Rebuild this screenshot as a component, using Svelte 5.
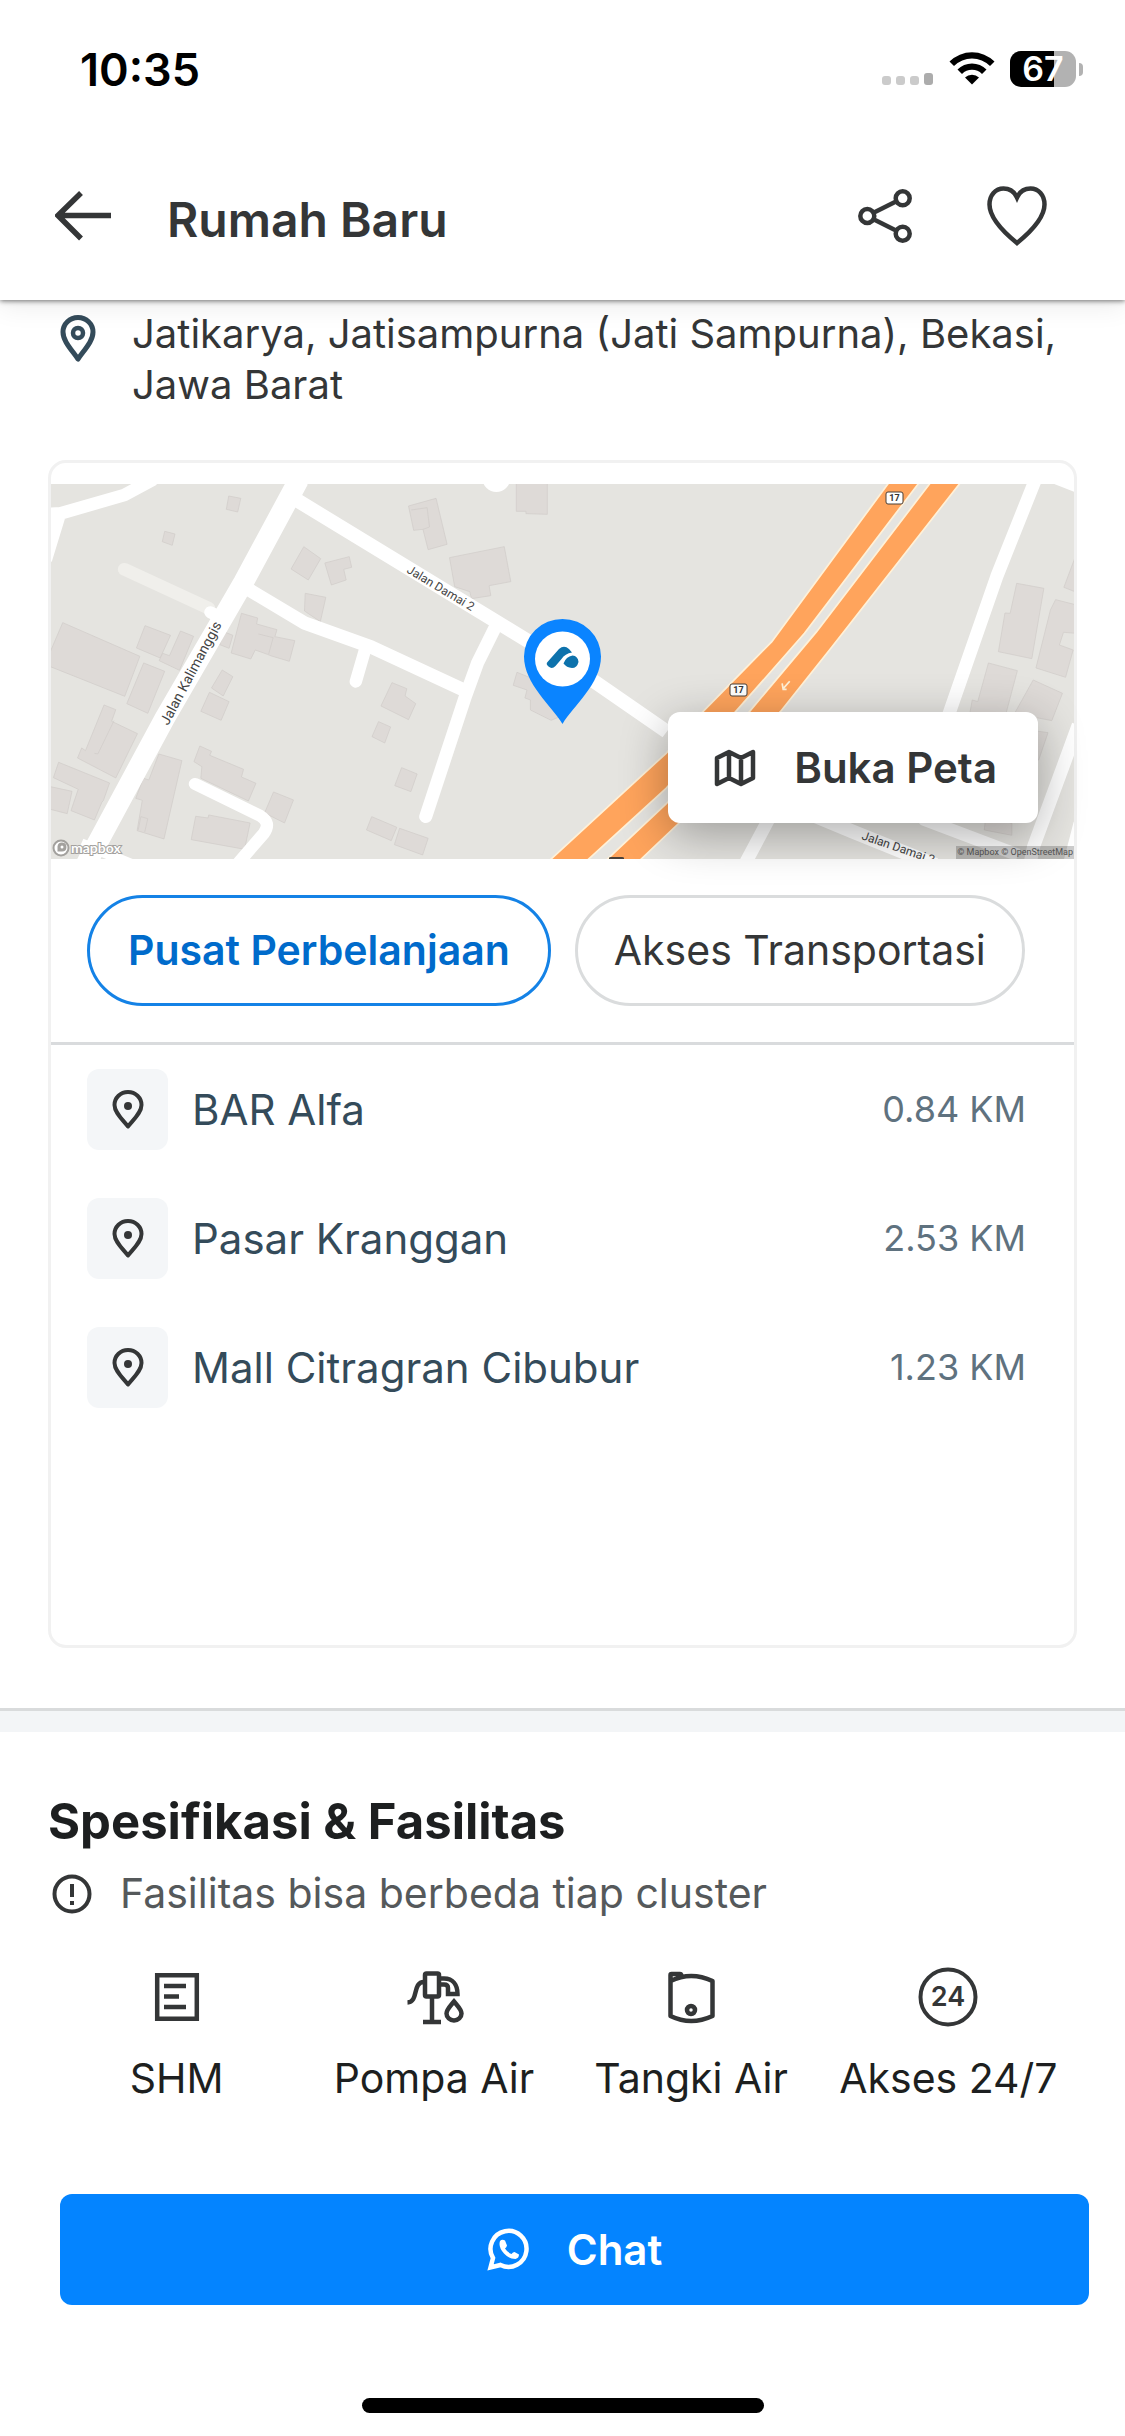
<script>
  const tabs = ['Pusat Perbelanjaan', 'Akses Transportasi'];
  let activeTab = $state(0);
  let liked = $state(false);

  const places = [
    { name: 'BAR Alfa', distance: '0.84 KM' },
    { name: 'Pasar Kranggan', distance: '2.53 KM' },
    { name: 'Mall Citragran Cibubur', distance: '1.23 KM' }
  ];

  const features = [
    { icon: 'certificate', label: 'SHM' },
    { icon: 'pump', label: 'Pompa Air' },
    { icon: 'tank', label: 'Tangki Air' },
    { icon: 'access', label: 'Akses 24/7' }
  ];

  const westBuildings = [
    '548,138 583,145 574,186 541,178',
    '362,244 392,252 384,286 355,275',
    '1070,168 1150,145 1182,283 1127,299 1112,238 1085,241',
    '1383,95 1473,95 1473,193 1411,191 1411,184 1383,184',
    '1189,323 1348,290 1367,395 1304,407 1309,437 1253,446 1248,425 1204,410',
    '766,290 815,326 779,390 729,357',
    '827,339 898,320 905,352 882,358 889,390 846,405',
    '770,430 830,442 814,515 768,483',
    '66,518 290,619 246,739 30,650 30,605',
    '305,527 379,556 349,624 280,594',
    '408,543 446,559 405,661 346,632 356,610 376,617',
    '585,490 632,504 629,522 688,539 682,560 740,572 724,634 672,618 660,613 625,600 612,627 555,609',
    '533,545 560,556 549,595 522,584',
    '301,639 362,664 313,790 252,761',
    '529,660 560,680 532,738 498,714',
    '492,727 549,755 526,811 467,784',
    '186,765 220,779 208,814 283,851 220,984 109,924 121,894 132,902',
    '54,937 202,999 184,1052 180,1056 158,1110 90,1082 111,1018 39,983',
    '30,1010 93,1024 79,1091 30,1078',
    '345,912 412,932 360,1167 282,1142 297,1051 278,1045 300,985 316,990',
    '464,888 498,904 493,916 591,958 585,981 627,1000 605,1053 467,985 470,950 447,935',
    '678,1026 736,1050 710,1119 652,1089',
    '452,1099 488,1104 490,1095 610,1119 594,1198 439,1169',
    '1022,698 1065,716 1060,738 1091,761 1070,809 990,768',
    '983,815 1018,831 1001,879 964,860',
    '1050,953 1095,972 1077,1025 1030,1007',
    '963,1100 1036,1132 1020,1172 948,1140',
    '1044,1135 1127,1165 1111,1215 1029,1184',
    '1385,667 1440,690 1510,800 1484,811 1424,780 1424,750 1408,744 1414,720 1374,706'
  ];

  const eastBuildings = [
    '1326,400 1405,415 1370,626 1273,605 1292,489 1307,490',
    '1500,310 1463,412 1500,427',
    '1439,449 1500,465 1500,550 1462,547 1450,585 1490,600 1468,682 1382,654 1424,480',
    '1244,639 1328,662 1290,810 1190,790 1197,750 1213,755',
    '1374,690 1459,730 1428,812 1320,790',
    '1360,840 1417,848 1390,930 1340,930',
    '1236,1100 1312,1120 1312,1156 1232,1140'
  ];
</script>

<div class="page">
  <header class="top">
    <div class="status">
      <time>10:35</time>
      <div class="indicators">
        <svg width="52" height="12" viewBox="0 0 52 12" aria-hidden="true">
          <g fill="#cbcbcb">
            <rect x="0" y="3" width="9" height="9" rx="3" />
            <rect x="14" y="3" width="9" height="9" rx="3" />
            <rect x="28" y="3" width="9" height="9" rx="3" />
          </g>
          <rect x="42" y="0" width="9" height="12" rx="3" fill="#acacac" />
        </svg>
        <svg class="wifi" width="46" height="34" viewBox="0 0 46 34" aria-hidden="true">
          <path d="M0.5 10.5A32 32 0 0 1 45.500 10.500L41 15A25.500 25.500 0 0 0 5 15Z" />
          <path d="M8.500 18.500A20.500 20.500 0 0 1 37.500 18.500L33 23A14 14 0 0 0 13 23Z" />
          <path d="M16 26.500A10 10 0 0 1 30 26.500L23 33.500Z" />
        </svg>
        <div class="battery"><span>67</span></div>
      </div>
    </div>
    <nav class="bar">
      <button class="icon" aria-label="Kembali">
        <svg width="56" height="50" viewBox="0 0 56 50" fill="none" stroke="#343637" stroke-width="5.500">
          <path d="M56 24.500H3M26 2L3 24.500L26 47.500" />
        </svg>
      </button>
      <h1>Rumah Baru</h1>
      <button class="icon" aria-label="Bagikan">
        <svg width="54" height="54" viewBox="0 0 54 54" fill="none" stroke="#343637" stroke-width="4.500">
          <circle cx="9.300" cy="27" r="7" />
          <circle cx="44.700" cy="9.300" r="7" />
          <circle cx="44.700" cy="44.700" r="7" />
          <path d="M16 23.500L38 12.500M16 30.500L38 41.500" />
        </svg>
      </button>
      <button class="icon" aria-label="Simpan" aria-pressed={liked} onclick={() => (liked = !liked)}>
        <svg width="60" height="60" viewBox="0 0 60 60" fill={liked ? '#343637' : 'none'} stroke="#343637" stroke-width="4.500">
          <path d="M30 57C14 44 2.500 30 2.500 18.500C2.500 9 8.500 2.500 16.500 2.500C23 2.500 27.500 6 30 11.500C32.500 6 37 2.500 43.500 2.500C51.500 2.500 57.500 9 57.500 18.500C57.500 30 46 44 30 57Z" />
        </svg>
      </button>
    </nav>
  </header>

  <main>
    <section class="location">
      <div class="address">
        <svg width="36" height="47" viewBox="0 0 36 47" fill="none" stroke="#344b5a" aria-hidden="true">
          <path d="M18 44C11 34 3 26 3 17A15 14.500 0 0 1 33 17C33 26 25 34 18 44Z" stroke-width="5" stroke-linejoin="round" />
          <circle cx="18" cy="18" r="5" stroke-width="4.500" />
        </svg>
        <p>Jatikarya, Jatisampurna (Jati Sampurna), Bekasi, Jawa Barat</p>
      </div>

      <div class="card">
        <div class="map">
          <svg class="canvas" viewBox="0 0 1023 375" preserveAspectRatio="xMidYMid slice" role="img" aria-label="Peta lokasi">
            <rect width="1023" height="375" fill="#e5e4e0" />
            <g transform="translate(-11 -34) scale(.3444 .3333)">
              <g fill="#dedad7" stroke="#cfcbc8" stroke-width="2">
                {#each westBuildings as points}<polygon {points} />{/each}
                <path d="M1078 180L1124 173L1131 231L1112 238M634 552L677 563L664 612M158 910L168 912L215 812M285 1140L293 1100L313 1106L304 1146" fill="none" />
              </g>
              <path d="M245 358L490 475" stroke="#f0efeb" stroke-width="38" stroke-linecap="round" />
              <g fill="none" stroke="#fff" stroke-linejoin="round">
                <path d="M751 90L592 395L362 805L130 1250" stroke-width="60" />
                <path d="M745 150L1325 515L1610 695L1820 845" stroke-width="42" />
                <path d="M600 415L770 520L960 590L1235 722" stroke-width="40" />
                <path d="M20 192L60 190L245 135L330 88M56 195L16 330" stroke-width="38" />
                <path d="M120 1180L280 1248" stroke-width="30" />
                <g stroke-linecap="round">
                  <path d="M495 487L520 500M945 595L917 695" stroke-width="36" />
                  <path d="M1325 525L1270 640L1235 740L1120 1100" stroke-width="38" />
                  <path d="M450 1002L640 1098Q672 1118 650 1150L575 1240" stroke-width="36" />
                </g>
              </g>
              <circle cx="1325" cy="86" r="40" fill="#fff" />
            </g>
            <g transform="translate(509 -34) scale(.3444 .3333)">
              <g fill="#dedad7" stroke="#cfcbc8" stroke-width="2">
                {#each eastBuildings as points}<polygon {points} />{/each}
              </g>
              <g fill="none" stroke="#fff" stroke-width="38" stroke-linejoin="round">
                <path d="M1380 90L1268 380L1130 790L1060 1110L1330 1215M610 1100L538 1240" />
                <path d="M1505 825L1375 1190L1365 1240M1510 1120L1480 1240" />
                <path d="M700 1080L850 1145L1090 1245" stroke-width="42" />
              </g>
              <polygon points="1430,100 1500,100 1500,128" fill="#fff" />
              <g fill="#ffa45c" stroke="#fff1d8" stroke-width="5">
                <polygon points="957,95 615,575 415,785 308,910 -34,1235 75,1235 308,1015 510,785 710,550 1045,95" />
                <polygon points="1078,95 745,545 550,785 308,1062 130,1235 228,1235 345,1120 640,785 790,590 1165,95" />
              </g>
              <path d="M667 694L648 716M645 700L648 718L658 718" fill="none" stroke="#fff1d8" stroke-width="5" />
            </g>
            <g fill="#fff" stroke="#4a4038" stroke-width="1">
              <rect x="835" y="8" width="17" height="12" rx="2" />
              <rect x="679" y="200" width="17" height="12" rx="2" />
            </g>
            <path d="M558 375V374Q558 373 560 373H571Q573 373 573 374V375Z" fill="#4a4038" />
            <g class="shield">
              <text x="843.500" y="17">17</text>
              <text x="687.500" y="209">17</text>
            </g>
            <g class="street">
              <text transform="translate(117 242) rotate(-62)">Jalan Kalimanggis</text>
              <text class="small" transform="translate(355 88) rotate(31)">Jalan Damai 2</text>
              <text class="small" transform="translate(810 355) rotate(19)">Jalan Damai 2</text>
            </g>
            <g stroke="#a3a19e" fill="#fff">
              <circle cx="10" cy="364" r="7.500" stroke-width="2" />
              <path d="M6.500 367.500V362.500A4.500 4.500 0 1 1 11 367.500Z" fill="#a3a19e" stroke="none" />
              <circle cx="11" cy="363" r="1.500" stroke="none" />
              <text class="brand" x="20" y="369">mapbox</text>
            </g>
            <path d="M511.500 240C501 222 473 200 473 172.500A38.500 37.500 0 0 1 550 172.500C550 200 522 222 511.500 240Z" fill="#0a84ff" />
            <circle cx="511.500" cy="175" r="27.500" fill="#fff" />
            <path d="M496.500 178L508 165Q513 160.500 518 165L521 168.500Q514 169.500 510.500 175L504.500 182Q501 185.500 497.500 182.500Q494.500 180 496.500 178Z" fill="#0d72ac" />
            <path d="M512.500 179.500Q515 172.500 521.500 171.500Q527 172 527.500 178Q526 184 521 184Q515.500 183.500 512.500 179.500Z" fill="#0d72ac" />
          </svg>
          <small>© Mapbox © OpenStreetMap</small>
          <button class="open-map">
            <svg width="42" height="38" viewBox="0 0 42 38" fill="none" stroke="#343637" stroke-width="4.500" stroke-linejoin="round" aria-hidden="true">
              <path d="M3 9L15 3L27 9L39 3V29L27 35L15 29L3 35ZM15 3V29M27 9V35" />
            </svg>
            Buka Peta
          </button>
        </div>

        <div class="tabs" role="tablist">
          {#each tabs as tab, i}
            <button role="tab" aria-selected={activeTab === i} class:active={activeTab === i} onclick={() => (activeTab = i)}>{tab}</button>
          {/each}
        </div>

        <ul class="places">
          {#each places as place}
            <li>
              <span class="badge">
                <svg width="32" height="40" viewBox="0 0 32 40" aria-hidden="true">
                  <path d="M16 36.500C10 29 2.500 22.500 2.500 15A13.500 13 0 0 1 29.500 15C29.500 22.500 22 29 16 36.500Z" fill="none" stroke="#343637" stroke-width="4" stroke-linejoin="round" />
                  <circle cx="16" cy="16" r="4" fill="#343637" />
                </svg>
              </span>
              <span class="name">{place.name}</span>
              <span class="distance">{place.distance}</span>
            </li>
          {/each}
        </ul>
      </div>
    </section>

    <section class="specs">
      <h2>Spesifikasi &amp; Fasilitas</h2>
      <p class="note">
        <svg width="42" height="42" viewBox="0 0 42 42" fill="none" stroke="#343637" stroke-width="4" aria-hidden="true">
          <circle cx="21" cy="21" r="17.500" />
          <path d="M21 11V24M21 28V32" />
        </svg>
        Fasilitas bisa berbeda tiap cluster
      </p>
      <ul class="features">
        {#each features as feature}
          <li>
            <svg width="60" height="60" viewBox="0 0 60 60" fill="none" stroke="#343637" stroke-width="4.500" aria-hidden="true">
              {#if feature.icon === 'certificate'}
                <path d="M10.200 8.200H49.800V51.800H10.200ZM17 19H39M17 29.500H32M17 40H39" />
              {:else if feature.icon === 'pump'}
                <rect x="21" y="6.500" width="14" height="23" rx="1.500" />
                <path d="M28 30V54M19 55H37M20 15C8 15 15 35 3.500 35.500M36 11.500H40C49 11.500 53.500 18 53.500 27H44V21Q44 17.500 40 17.500H36" />
                <path d="M50 37.500C46 42.500 42.500 45.500 42.500 49.500A7.500 7 0 0 0 57.500 49.500C57.500 45.500 54 42.500 50 37.500Z" transform="translate(0 -3)" />
              {:else if feature.icon === 'tank'}
                <path d="M9.500 14V49Q30 59 51.500 49V14Q30 4 9.500 14ZM9.500 16V8Q9.500 7 10.500 7H19Q21 7 20 10" stroke-linejoin="round" />
                <circle cx="30" cy="43" r="4" />
              {:else}
                <circle cx="30" cy="30" r="27.500" stroke-width="4" />
                <text class="clock" x="30" y="39">24</text>
              {/if}
            </svg>
            <span>{feature.label}</span>
          </li>
        {/each}
      </ul>
    </section>
  </main>

  <footer>
    <button class="chat">
      <svg width="44" height="44" viewBox="0 0 44 44" aria-hidden="true">
        <path d="M3.500 39.500L6 30A18 18 0 1 1 13.500 37Z" fill="none" stroke="#fff" stroke-width="4.500" />
        <path d="M13 13Q15 11 18 12.500L20 17.500Q19.500 19.500 18 20.500Q20.500 24.500 24.500 26Q26 24 27.500 24L32 26.500Q32 30 28.500 31Q22 31 17 25.500Q11 19 13 13Z" fill="#fff" />
      </svg>
      Chat
    </button>
    <div class="home"></div>
  </footer>
</div>

<style>
  :global(body) {
    margin: 0;
    background: #fff;
  }

  .page {
    display: flex;
    flex-direction: column;
    min-height: 100vh;
    background: #fff;
    color: #343637;
    font-family: Inter, 'Liberation Sans', sans-serif;
    font-size: 41px;
    line-height: 51px;
  }

  h1, h2, p, ul {
    margin: 0;
    padding: 0;
  }

  ul {
    list-style: none;
  }

  button {
    font: inherit;
    color: inherit;
    cursor: pointer;
  }

  svg {
    display: block;
    flex: none;
  }

  .top {
    position: sticky;
    top: 0;
    z-index: 2;
    background: #fff;
    box-shadow: 0 1px 5px rgba(0, 0, 0, 0.55), 0 8px 24px rgba(0, 0, 0, 0.07);
  }

  .status {
    display: flex;
    align-items: center;
    justify-content: space-between;
    height: 138px;
    padding: 0 43px 0 80px;
    color: #000;
    font-size: 45px;
    font-weight: 600;
  }

  .indicators {
    display: flex;
    align-items: flex-end;
    gap: 15px;
  }

  .indicators > svg {
    margin-bottom: 2px;
  }

  .battery {
    position: relative;
    width: 66px;
    height: 36px;
    margin-right: 6px;
    border-radius: 11px;
    background: linear-gradient(90deg, #000 67%, #b2b2b2 67%);
    color: #fff;
    font-size: 34px;
    line-height: 36px;
    text-align: center;
  }

  .battery::after {
    content: '';
    position: absolute;
    top: 12px;
    right: -7px;
    width: 4px;
    height: 13px;
    border-radius: 0 6px 6px 0;
    background: #b2b2b2;
  }

  .bar {
    display: flex;
    align-items: center;
    height: 156px;
    padding: 0 78px 6px 55px;
  }

  .icon {
    padding: 0;
    border: 0;
    background: none;
  }

  .icon + .icon {
    margin-left: 75px;
  }

  h1 {
    flex: 1;
    padding: 6px 0 0 56px;
    font-size: 48px;
    font-weight: 600;
  }

  main {
    flex: 1;
  }

  .location {
    padding: 8px 48px 60px;
  }

  .address {
    display: flex;
    gap: 36px;
    margin-bottom: 50px;
    padding-left: 12px;
    font-size: 40px;
  }

  .address svg {
    margin-top: 7px;
  }

  .card {
    padding: 21px 0 237px;
    border: 3px solid #f1f1f1;
    border-radius: 18px;
  }

  .map {
    position: relative;
    height: 375px;
  }

  .canvas {
    width: 100%;
    height: 100%;
  }

  .street text {
    fill: #444;
    font: 14px Roboto, sans-serif;
  }

  .street .small {
    font-size: 12px;
  }

  .shield text {
    fill: #333;
    font: 700 9px Roboto, sans-serif;
    text-anchor: middle;
  }

  .brand {
    font: 700 14px Lato, sans-serif;
    stroke-width: 2px;
    paint-order: stroke;
  }

  .map small {
    position: absolute;
    right: 0;
    bottom: 0;
    padding: 0 1px;
    background: rgba(0, 0, 0, 0.2);
    color: #555;
    font: 9px/13px 'Noto Sans', Roboto, sans-serif;
    font-family: Roboto, sans-serif;
  }

  .open-map {
    position: absolute;
    right: 36px;
    bottom: 36px;
    display: flex;
    align-items: center;
    gap: 38px;
    padding: 30px 41px 30px 46px;
    border: 0;
    border-radius: 12px;
    background: #fff;
    box-shadow: 0 12px 48px rgba(0, 0, 0, 0.32);
    font-size: 42px;
    font-weight: 600;
    white-space: nowrap;
  }

  .tabs {
    display: flex;
    gap: 24px;
    padding: 36px;
    border-bottom: 3px solid #d9dbdd;
  }

  .tabs button {
    padding: 27px 36px;
    border: 3px solid #dadcdd;
    border-radius: 56px;
    background: #fff;
    white-space: nowrap;
  }

  .tabs .active {
    padding: 27px 38px;
    border-color: #1482e6;
    color: #006bcb;
    font-weight: 600;
  }

  .places {
    display: grid;
    gap: 48px;
    padding: 24px 48px 0 36px;
  }

  .places li {
    display: flex;
    align-items: center;
    gap: 24px;
  }

  .badge {
    display: grid;
    place-items: center;
    width: 81px;
    height: 81px;
    border-radius: 12px;
    background: #f4f6f8;
  }

  .name {
    flex: 1;
    color: #344b5a;
    font-size: 42px;
  }

  .distance {
    color: #5f727f;
    font-size: 36px;
  }

  .specs {
    padding: 81px 48px 90px;
    border-top: 3px solid #d9dbdc;
    box-shadow: inset 0 21px 0 #f3f5f7;
  }

  h2 {
    margin-bottom: 16px;
    color: #1d1f20;
    font-size: 49px;
    font-weight: 700;
    line-height: 60px;
  }

  .note {
    display: flex;
    align-items: center;
    gap: 27px;
    margin-bottom: 48px;
    padding-left: 3px;
    color: #55595b;
  }

  .features {
    display: grid;
    grid-template-columns: repeat(4, 1fr);
    color: #1d1f20;
  }

  .features li {
    display: flex;
    flex-direction: column;
    align-items: center;
    gap: 26px;
    white-space: nowrap;
  }

  .clock {
    fill: #343637;
    stroke: none;
    font: 600 27px Inter, sans-serif;
    text-anchor: middle;
  }

  footer {
    display: flex;
    flex-direction: column;
    gap: 93px;
    padding-bottom: 24px;
  }

  .chat {
    display: flex;
    align-items: center;
    justify-content: center;
    gap: 36px;
    margin: 0 36px 0 60px;
    padding: 30px;
    border: 0;
    border-radius: 12px;
    background: #0484ff;
    color: #fff;
    font-size: 42px;
    font-weight: 600;
  }

  .home {
    align-self: center;
    width: 402px;
    height: 15px;
    border-radius: 8px;
    background: #000;
  }
</style>
